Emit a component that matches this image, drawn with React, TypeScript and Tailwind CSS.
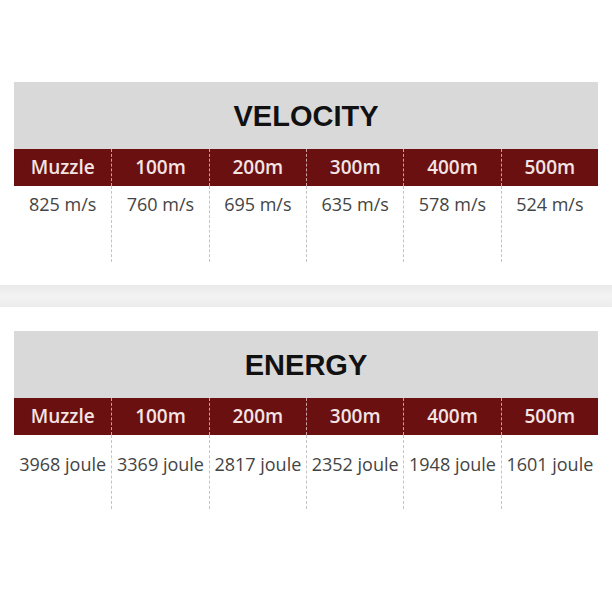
import React from 'react';

const cols = ["Muzzle", "100m", "200m", "300m", "400m", "500m"];

const tables = [
  { title: "VELOCITY", values: ["825 m/s", "760 m/s", "695 m/s", "635 m/s", "578 m/s", "524 m/s"], pad: "pt-[5px]", h: "h-[76px]" },
  { title: "ENERGY", values: ["3968 joule", "3369 joule", "2817 joule", "2352 joule", "1948 joule", "1601 joule"], pad: "pt-[16px]", h: "h-[74px]" },
];

function BallisticTable({ title, values, pad, h }: { title: string; values: string[]; pad: string; h: string }) {
  return (
    <div className="mx-[14px]">
      <div className="h-[67px] bg-[#d9d9d9] flex items-center justify-center">
        <h2 className="text-[29px] font-bold text-[#111] pt-[3px]" style={{ fontFamily: '"Liberation Sans", Arial, sans-serif' }}>
          {title}
        </h2>
      </div>
      <div className="grid grid-cols-6 h-[37px] bg-[#6a1010]">
        {cols.map((c, i) => (
          <div
            key={c}
            className={`flex items-center justify-center text-[19px] font-semibold text-[#f3e4e4] ${i > 0 ? 'border-l border-dashed border-[#c9a0a0]' : ''}`}
            style={{ fontFamily: '"Open Sans", Lato, sans-serif' }}
          >
            {c}
          </div>
        ))}
      </div>
      <div className={`grid grid-cols-6 ${h}`}>
        {values.map((v, i) => (
          <div
            key={i}
            className={`flex justify-center ${pad} text-[18px] text-[#444] whitespace-nowrap ${i > 0 ? 'border-l border-dashed border-[#c4c4c4]' : ''}`}
            style={{ fontFamily: '"Open Sans", Lato, sans-serif' }}
          >
            {v}
          </div>
        ))}
      </div>
    </div>
  );
}

export default function App() {
  return (
    <div className="w-[612px] h-[593px] bg-white pt-[82px]">
      <BallisticTable {...tables[0]} />
      <div className="mt-[23px] h-[22px] bg-gradient-to-b from-[#e9e9e9] via-[#f3f3f3] to-[#ececec]" />
      <div className="mt-[24px]">
        <BallisticTable {...tables[1]} />
      </div>
    </div>
  );
}
